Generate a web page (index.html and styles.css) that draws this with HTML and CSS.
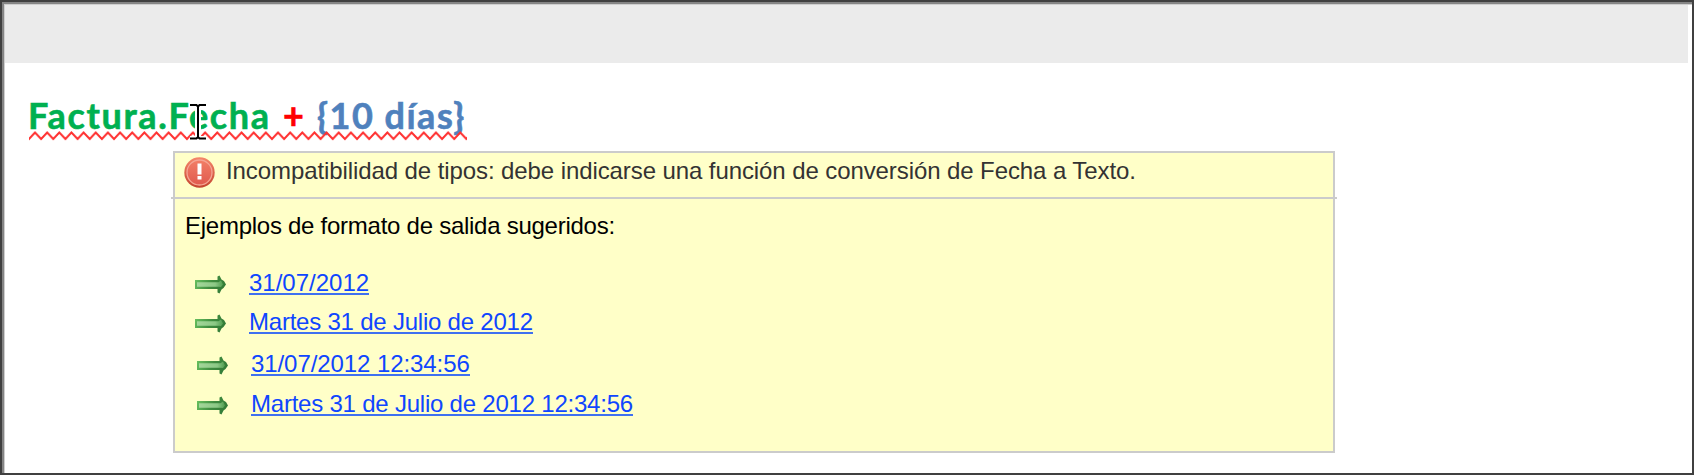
FILE: index.html
```html
<!DOCTYPE html>
<html lang="es">
<head>
<meta charset="utf-8">
<title>Editor de fórmulas</title>
<link rel="stylesheet" href="styles.css">
</head>
<body>
<svg class="defs" width="0" height="0" aria-hidden="true">
  <defs>
    <linearGradient id="shaft" x1="0" y1="0" x2="1" y2="0.300"><stop offset="0" stop-color="#6cc763"/><stop offset="0.600" stop-color="#3f8c40"/><stop offset="1" stop-color="#347d38"/></linearGradient>
    <linearGradient id="shine" x1="0" y1="0" x2="1" y2="0"><stop offset="0" stop-color="#a3d69a"/><stop offset="0.700" stop-color="#8cc886"/><stop offset="1" stop-color="#4f9c50"/></linearGradient>
    <linearGradient id="alert" x1="0" y1="0" x2="0" y2="1"><stop offset="0" stop-color="#f5866a"/><stop offset="1" stop-color="#c4442f"/></linearGradient>
    <linearGradient id="face" x1="0" y1="0" x2="0" y2="1"><stop offset="0" stop-color="#f27e66"/><stop offset="1" stop-color="#e05a4f"/></linearGradient>
    <pattern id="wave" x="0" y="0" width="12.15" height="10" patternUnits="userSpaceOnUse"><path d="M-6 1.500L0 8L6 1.500L12.15 8L18 1.500" fill="none" stroke="#ff3030" stroke-width="1.900"/></pattern>
    <symbol id="arrow" viewBox="0 0 31 19">
      <path d="M0 5H22.500V1.500L24.500 0.500L26.500 4.500L29 6L31 9.500L28.500 13L26.500 14.500L24.500 18.500L22.500 17.500V14H0Z" fill="url(#shaft)"/>
      <path d="M2 7.300H23.500L26 5.500L28 9.500L26 12L24 11.800H2Z" fill="url(#shine)"/>
    </symbol>
  </defs>
</svg>
<div class="window">
  <div class="toolbar"></div>
  <div class="formula">
    <span class="field">Factura.Fecha</span>
    <span class="operator">+</span>
    <span class="literal">{10 días}</span>
    <svg class="squiggle" width="438" height="10"><rect width="438" height="10" fill="url(#wave)"/></svg>
    <svg class="cursor" width="16" height="36" viewBox="0 0 16 36">
      <path d="M0 1H6L8 3L10 1H16M8 2V34M0 35H6L8 33L10 35H16" fill="none" stroke="#fff" stroke-width="6"/>
      <path d="M0 1H6.500L8 2.500L9.500 1H16M0 34.500H6.500L8 33L9.500 34.500H16M8 2V33.500" fill="none" stroke="#000" stroke-width="2"/>
    </svg>
  </div>
  <div class="popup">
    <div class="message">
      <svg class="alert" width="31" height="31" viewBox="0 0 31 31">
        <circle cx="15.500" cy="15.500" r="15.200" fill="url(#alert)"/>
        <circle cx="15.500" cy="15.500" r="12.500" fill="url(#face)" stroke="#f5a594" stroke-width="1.300"/>
        <path d="M13.500 6.500H17.500V17.500H13.500ZM13.500 19H17.500V22.500H13.500Z" fill="#fff"/>
      </svg>
      <span class="error">Incompatibilidad de tipos: debe indicarse una función de conversión de Fecha a Texto.</span>
    </div>
    <div class="suggestions">
      <p class="caption">Ejemplos de formato de salida sugeridos:</p>
      <ul class="list">
        <li class="item"><svg class="arrow"><use href="#arrow"/></svg><a class="link short">31/07/2012</a></li>
        <li class="item"><svg class="arrow"><use href="#arrow"/></svg><a class="link">Martes 31 de Julio de 2012</a></li>
        <li class="item shifted"><svg class="arrow"><use href="#arrow"/></svg><a class="link time">31/07/2012 12:34:56</a></li>
        <li class="item shifted"><svg class="arrow"><use href="#arrow"/></svg><a class="link">Martes 31 de Julio de 2012 12:34:56</a></li>
      </ul>
    </div>
  </div>
</div>
</body>
</html>
```
FILE: styles.css
```css
* { box-sizing: border-box; }
body { margin: 0; background: #fff; font-family: "Liberation Sans", Arial, sans-serif; }
.defs { position: absolute; }
.window {
  height: 475px;
  border: 2px solid #404040;
  padding: 3px 4px 0 3px;
  background: #fff;
  box-shadow: inset 2px 2px #858585, inset 3px 3px #cfcfcf;
  overflow: hidden;
}
.toolbar { height: 58px; background: #ebebeb; }
.formula {
  position: relative;
  display: flex;
  height: 88px;
  padding: 30px 0 0 23px;
  font: bold 36px/44px Lato, sans-serif;
  -webkit-text-stroke: 0.6px currentColor;
  white-space: pre;
}
.field { width: 255px; color: #00b050; letter-spacing: 1.65px; }
.operator { width: 34px; color: #f00; }
.literal { color: #4f81bd; letter-spacing: 1.5px; }
.squiggle { position: absolute; left: 24px; top: 68px; }
.cursor { position: absolute; left: 185px; top: 41px; overflow: visible; }
.popup {
  width: 1162px;
  height: 302px;
  margin-left: 168px;
  border: 2px solid #cbcbcb;
  background: #ffffc8;
  font-size: 24px;
  line-height: 28px;
  white-space: nowrap;
}
.message {
  display: flex;
  height: 46px;
  margin: 0 -4px;
  padding: 4px 0 0 13px;
  border-bottom: 2px solid #cbcbcb;
}
.error { margin-left: 11px; color: #333; letter-spacing: -0.09px; }
.alert { flex: none; }
.caption { margin: 0; padding: 13px 0 0 10px; color: #000; letter-spacing: -0.26px; }
.list { margin: 0; padding: 29px 0 0 20px; list-style: none; }
.item { display: flex; height: 40px; }
.item:nth-child(2) { margin-top: -1px; }
.shifted { padding: 2px 0 0 2px; }
.arrow { width: 31px; height: 19px; margin: 6px 23px 0 0; }
.link {
  height: 26px;
  color: #0f46ff;
  border-bottom: 2px solid #3f70f0;
  letter-spacing: -0.22px;
}
.short { letter-spacing: 0; }
.time { letter-spacing: -0.08px; }
```
